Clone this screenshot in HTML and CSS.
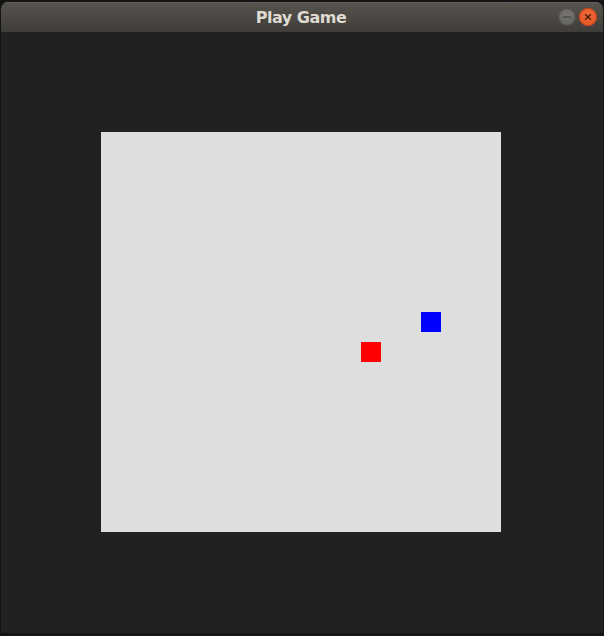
FILE: index.html
```html
<!DOCTYPE html>
<html>
<head>
<meta charset="utf-8">
<link rel="stylesheet" href="styles.css">
</head>
<body>
<div class="window">
  <div class="titlebar">
    <span class="title">Play Game</span>
    <div class="controls">
      <span class="btn min"><svg width="18" height="18" viewBox="0 0 18 18"><line x1="5" y1="9" x2="13" y2="9" stroke="#3a3a38" stroke-width="1.2"/></svg></span>
      <span class="btn close"><svg width="18" height="18" viewBox="0 0 18 18"><path d="M6.2 6.2 L11.8 11.8 M11.8 6.2 L6.2 11.8" stroke="#4a1a08" stroke-width="1.4"/></svg></span>
    </div>
  </div>
  <div class="content">
    <div class="board">
      <div class="cell red" style="left:260px; top:210px"></div>
      <div class="cell blue" style="left:320px; top:180px"></div>
    </div>
  </div>
</div>
</body>
</html>
```
FILE: styles.css
```css
html, body { margin: 0; padding: 0; }
body { background: #141414; width: 604px; height: 636px; overflow: hidden; }
.window {
  margin: 2px 1px 0 1px;
  width: 602px;
  height: 631px;
  background: #212121;
  border-radius: 7px 7px 0 0;
  overflow: hidden;
  display: flex;
  flex-direction: column;
}
.titlebar {
  height: 30px;
  flex: none;
  background: linear-gradient(#57544e, #3f3d39);
  position: relative;
  display: flex;
  align-items: center;
  justify-content: center;
  box-shadow: inset 0 1px 0 #64615b;
}
.title {
  font-family: "DejaVu Sans", "Liberation Sans", sans-serif;
  font-weight: bold;
  font-size: 16px;
  color: #dfdbd2;
  letter-spacing: -0.5px;
  margin-left: -2px;
  margin-top: 1px;
}
.controls {
  position: absolute;
  right: 6px;
  top: 6px;
  display: flex;
  gap: 3px;
}
.btn {
  width: 18px;
  height: 18px;
  border-radius: 50%;
  display: block;
}
.btn svg { display: block; }
.min { background: radial-gradient(circle at 50% 40%, #7a7874, #5c5a56); box-shadow: inset 0 0 0 1px #4a4844; }
.close { background: radial-gradient(circle at 50% 40%, #f26a3a, #e0501f); box-shadow: inset 0 0 0 1px #c2441a; }
.content {
  flex: 1;
  display: flex;
  padding-top: 100px;
  padding-left: 100px;
}
.board {
  width: 400px;
  height: 400px;
  background: #dedede;
  position: relative;
}
.cell { position: absolute; width: 20px; height: 20px; }
.red { background: #ff0000; }
.blue { background: #0000ff; }
```
